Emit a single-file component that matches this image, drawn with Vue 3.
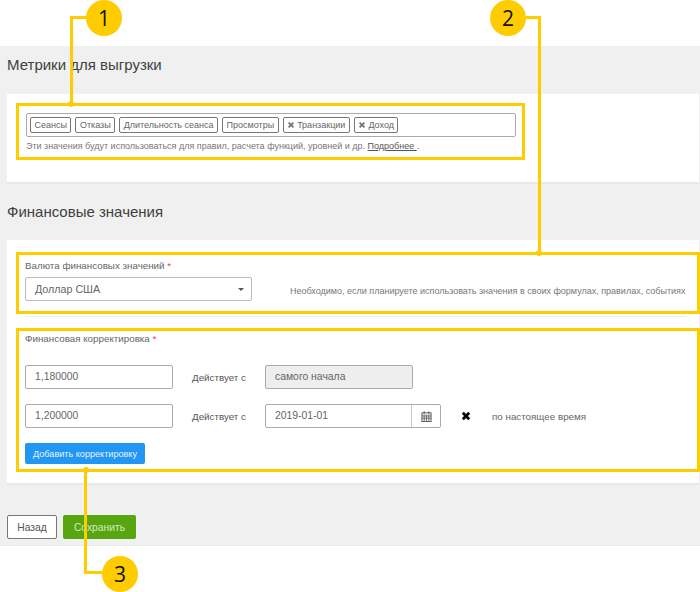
<script setup>
const tags = [
  { text: 'Сеансы' },
  { text: 'Отказы' },
  { text: 'Длительность сеанса' },
  { text: 'Просмотры' },
  { text: 'Транзакции', removable: true },
  { text: 'Доход', removable: true }
]
</script>

<template>
  <div class="page">
    <main class="panel">
      <h2 class="heading first">Метрики для выгрузки</h2>
      <section class="card card-metrics">
        <div class="tag-input">
          <span v-for="t in tags" :key="t.text" class="tag">
            <svg v-if="t.removable" class="tag-x" viewBox="0 0 10 10"><path d="M2 2l6 6M8 2l-6 6" /></svg>
            {{ t.text }}
          </span>
        </div>
        <p class="hint">Эти значения будут использоваться для правил, расчета функций, уровней и др. <a class="more">Подробнее </a>.</p>
      </section>

      <h2 class="heading second">Финансовые значения</h2>
      <section class="card card-finance">
        <div class="currency">
          <div class="currency-field">
            <label class="label">Валюта финансовых значений <i>*</i></label>
            <div class="select">Доллар США<span class="caret"></span></div>
          </div>
          <span class="help">Необходимо, если планируете использовать значения в своих формулах, правилах, событиях</span>
        </div>
        <div class="divider"></div>
        <label class="label adjust-label">Финансовая корректировка <i>*</i></label>
        <div class="row">
          <div class="input rate">1,180000</div>
          <span class="since">Действует с</span>
          <div class="input date disabled">самого начала</div>
        </div>
        <div class="row">
          <div class="input rate">1,200000</div>
          <span class="since">Действует с</span>
          <div class="date-group">
            <div class="date-value">2019-01-01</div>
            <div class="addon">
              <svg class="cal" viewBox="0 0 12 12">
                <rect x="1" y="2" width="10" height="9.5" fill="none" stroke="#555" />
                <path d="M1 4.5h10M1 6.5h10M1 8.500h10M3.500 4.500v7M6 4.500v7M8.500 4.500v7" stroke="#555" stroke-width=".8" />
                <path d="M3.500 .5v2.500M8.500 .5v2.500" stroke="#555" stroke-width="1.300" />
              </svg>
            </div>
          </div>
          <svg class="remove" viewBox="0 0 10 10"><path d="M1.800 1.800l6.400 6.400M8.200 1.800l-6.400 6.400" /></svg>
          <span class="now">по настоящее время</span>
        </div>
        <button class="btn-add">Добавить корректировку</button>
      </section>

      <div class="actions">
        <button class="btn-back">Назад</button>
        <button class="btn-save">Сохранить</button>
      </div>
    </main>

    <div class="hl hl-1"></div>
    <div class="hl hl-2"></div>
    <div class="hl hl-3"></div>

    <div class="lead lead-1v"></div>
    <div class="lead lead-1h"></div>
    <div class="dot dot-1"></div>
    <div class="badge badge-1">1</div>

    <div class="lead lead-2v"></div>
    <div class="lead lead-2h"></div>
    <div class="dot dot-2"></div>
    <div class="badge badge-2">2</div>

    <div class="lead lead-3v"></div>
    <div class="lead lead-3h"></div>
    <div class="dot dot-3"></div>
    <div class="badge badge-3">3</div>
  </div>
</template>

<style scoped>
.page {
  position: relative;
  width: 700px;
  height: 592px;
  overflow: hidden;
  background: #fff;
  padding-top: 46px;
  box-sizing: border-box;
  font-family: "Liberation Sans", Arial, sans-serif;
  color: #555;
}
.panel {
  height: 500px;
  box-sizing: border-box;
  background: #f0f0f0;
  padding-left: 7px;
  border-bottom: 1px solid #ebebeb;
}
.heading {
  margin: 0;
  font-weight: 400;
  font-size: 15px;
  line-height: 20px;
  color: #3f3f3f;
}
.heading.first { padding-top: 9px; height: 39px; }
.heading.second { padding-top: 18px; height: 38px; }
.card {
  width: 692px;
  box-sizing: border-box;
  background: #fff;
  border-bottom: 2px solid #e8e8e8;
  padding-left: 19px;
}
.card-metrics { height: 90px; padding-top: 19px; }
.tag-input {
  width: 490px;
  height: 24px;
  box-sizing: border-box;
  border: 1px solid #aaa;
  border-radius: 2px;
  display: flex;
  align-items: center;
  gap: 4px;
  padding-left: 3px;
}
.tag {
  display: flex;
  align-items: center;
  gap: 2px;
  height: 16px;
  box-sizing: border-box;
  padding: 0 3.500px;
  border: 1px solid #777;
  border-radius: 2px;
  font-size: 9px;
  color: #666;
  white-space: nowrap;
}
.tag-x { width: 8px; height: 8px; }
.tag-x path { stroke: #777; stroke-width: 2.400; fill: none; }
.hint {
  margin: 3px 0 0;
  font-size: 9px;
  line-height: 12px;
  color: #777;
  white-space: nowrap;
}
.more { color: #555; text-decoration: underline; }
.card-finance { height: 245px; padding-top: 20px; padding-left: 18px; }
.currency { display: flex; align-items: flex-end; height: 41px; }
.currency-field { width: 265px; }
.label {
  display: block;
  font-size: 9.800px;
  line-height: 12px;
  color: #666;
}
.label i { color: #e33; font-style: normal; }
.select {
  position: relative;
  width: 227px;
  height: 24px;
  margin-top: 5px;
  box-sizing: border-box;
  border: 1px solid #bbb;
  border-radius: 2px;
  padding-left: 9px;
  font-size: 10.700px;
  line-height: 23px;
  color: #666;
}
.caret {
  position: absolute;
  right: 7px;
  top: 10px;
  border: 3.500px solid transparent;
  border-top-color: #555;
  border-bottom-width: 0;
}
.help {
  font-size: 9px;
  line-height: 12px;
  color: #777;
  white-space: nowrap;
  padding-bottom: 4px;
}
.divider { width: 661px; margin-top: 15px; border-top: 1px solid #eee; }
.adjust-label { margin-top: 16px; margin-bottom: 20px; }
.row { display: flex; align-items: center; height: 24px; margin-bottom: 15px; }
.input {
  height: 24px;
  box-sizing: border-box;
  border: 1px solid #aaa;
  border-radius: 2px;
  padding-left: 9px;
  font-size: 10.400px;
  line-height: 22px;
  color: #666;
}
.rate { width: 148px; }
.since {
  margin-left: 19px;
  width: 73px;
  font-size: 9.800px;
  color: #555;
}
.date { width: 148px; }
.disabled { background: #eee; }
.date-group {
  width: 176px;
  height: 24px;
  box-sizing: border-box;
  border: 1px solid #aaa;
  border-radius: 2px;
  display: flex;
  font-size: 10.400px;
  line-height: 22px;
  color: #666;
}
.date-value { flex: 1; padding-left: 9px; }
.addon {
  width: 28px;
  border-left: 1px solid #ccc;
  display: flex;
  align-items: center;
  justify-content: center;
}
.cal { width: 11px; height: 11px; }
.remove { width: 10px; height: 10px; margin-left: 20px; }
.remove path { stroke: #000; stroke-width: 2.800; fill: none; }
.now { margin-left: 21px; font-size: 9.800px; color: #666; }
.btn-add {
  display: block;
  width: 120px;
  height: 21px;
  margin-top: 0;
  padding: 0;
  border: 0;
  border-radius: 2px;
  background: #2196f3;
  color: #e8f3fc;
  font: 9.100px "Liberation Sans", Arial, sans-serif;
}
.actions { display: flex; gap: 6px; margin-top: 30px; }
.actions button {
  height: 24px;
  padding: 0;
  border-radius: 2px;
  font: 10.300px "Liberation Sans", Arial, sans-serif;
}
.btn-back { width: 50px; background: #fff; border: 1px solid #777; color: #555; }
.btn-save { width: 73px; background: #57a50f; border: 0; color: #d5eac0; }

.hl { position: absolute; box-sizing: border-box; border: 3px solid #fc0; }
.hl-1 { left: 16px; top: 103px; width: 509px; height: 57px; }
.hl-2 { left: 16px; top: 252px; width: 684px; height: 62px; }
.hl-3 { left: 16px; top: 328px; width: 684px; height: 144px; }
.lead { position: absolute; background: #fc0; }
.dot { position: absolute; width: 6px; height: 6px; border-radius: 50%; background: #fc0; }
.badge {
  position: absolute;
  width: 36px;
  height: 36px;
  border-radius: 50%;
  background: #fc0;
  color: #111;
  font: 21px/36px "Open Sans", sans-serif;
  text-align: center;
}
.badge-1 { left: 86px; top: 0; }
.badge-2 { left: 490px; top: 0; }
.badge-3 { left: 102px; top: 556px; }
.lead-1v { left: 70px; top: 16px; width: 3px; height: 88px; }
.lead-1h { left: 70px; top: 16px; width: 20px; height: 3px; }
.dot-1 { left: 68px; top: 101px; }
.lead-2v { left: 538px; top: 16px; width: 3px; height: 236px; }
.lead-2h { left: 522px; top: 16px; width: 18px; height: 3px; }
.dot-2 { left: 536px; top: 250px; }
.lead-3v { left: 84px; top: 470px; width: 3px; height: 104px; }
.lead-3h { left: 84px; top: 571px; width: 20px; height: 3px; }
.dot-3 { left: 83px; top: 467px; }
</style>
